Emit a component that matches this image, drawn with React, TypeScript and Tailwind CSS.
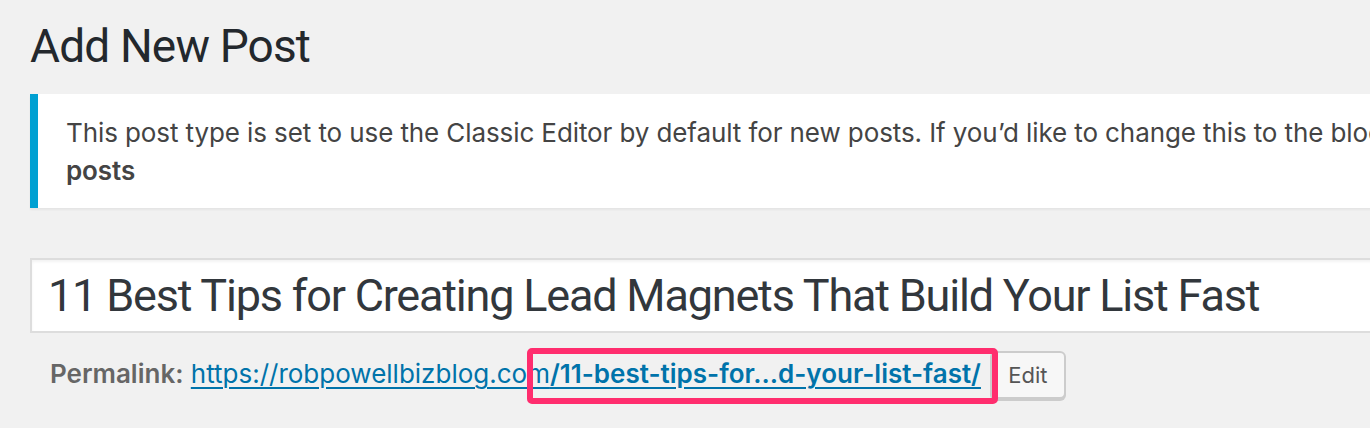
import React from "react";

export default function App() {
  return (
    <div className="w-[1370px] h-[428px] overflow-hidden bg-[#f1f1f1] font-['Inter',sans-serif]">
      <div className="pl-[30px] pt-[16px]">
        <h1 className="font-['Roboto',sans-serif] text-[46px] leading-[60px] font-normal text-[#23282d] tracking-[-0.85px]">
          Add New Post
        </h1>

        <div className="mt-[18px] w-[1600px] bg-white border-l-[8px] border-[#00a0d2] shadow-[0_2px_2px_rgba(0,0,0,0.05)] pl-[28px] pt-[20px] pb-[18px]">
          <p className="text-[26px] leading-[38px] text-[#444] tracking-[-0.1px]">
            <span className="whitespace-nowrap">
              This post type is set to use the Classic Editor by default for new posts. If you’d like to change this to the block editor, go to
            </span>
            <br />
            <b className="font-semibold">posts</b>
          </p>
        </div>

        <div className="mt-[50px] w-[1400px] h-[75px] bg-white border-[2px] border-[#dddddd] shadow-[inset_0_2px_3px_rgba(0,0,0,0.05)] pl-[16px] flex items-center">
          <span className="font-['Roboto',sans-serif] text-[45px] leading-[71px] text-[#32373c] tracking-[-1.2px] whitespace-nowrap">
            11 Best Tips for Creating Lead Magnets That Build Your List Fast
          </span>
        </div>

        <div className="relative mt-[17px] pl-[20px] h-[48px] leading-[48px] text-[26px] whitespace-nowrap">
          <b className="font-semibold text-[#666]">Permalink:</b>{" "}
          <a className="text-[#0073aa] underline underline-offset-[4px] decoration-[2px]" href="#">
            https://robpowellbizblog.com<span className="font-semibold">/11-best-tips-for...d-your-list-fast/</span>
          </a>{" "}
          <span className="inline-block align-top ml-[2px]">
            <span className="inline-flex items-center h-[48px] px-[16px] bg-[#f7f7f7] border-[2px] border-[#cccccc] rounded-[6px] shadow-[0_2px_0_#cccccc] text-[22px] leading-[44px] text-[#555]">
              Edit
            </span>
          </span>
          <div className="absolute left-[497px] top-[-2px] w-[471px] h-[56px] border-[6px] border-[#ff2d6e] rounded-[5px] pointer-events-none" />
        </div>
      </div>
    </div>
  );
}
